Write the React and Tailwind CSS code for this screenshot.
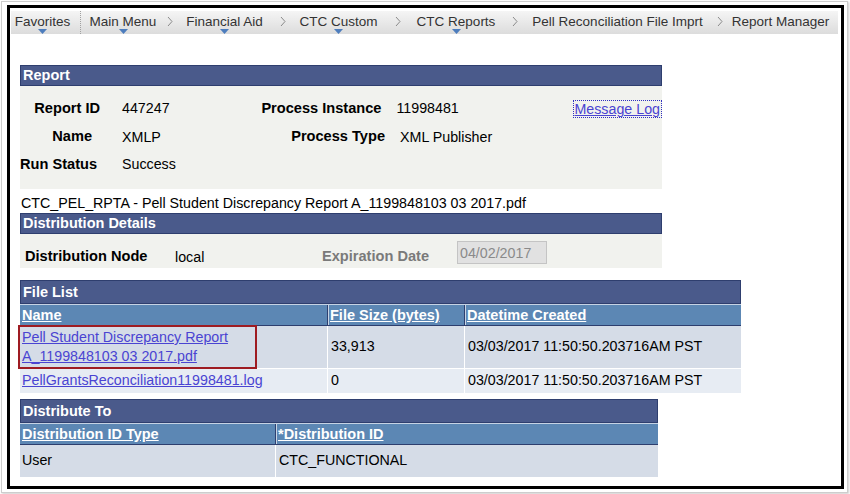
import React from "react";

// breadcrumb items: width of centred box, whether a drop-down marker sits under the text
const crumbs = [
  { label: "Main Menu", w: "w-[84px]", drop: true },
  { label: "Financial Aid", w: "w-[103px]", drop: true, chev: "ml-[2px]" },
  { label: "CTC Custom", w: "w-[105px]", drop: true, chev: "ml-[4px]" },
  { label: "CTC Reports", w: "w-[110px]", drop: true, chev: "ml-[4px]" },
  { label: "Pell Reconciliation File Imprt", w: "w-[199px]", drop: false, chev: "ml-[1px]" },
  { label: "Report Manager", w: "w-[115px]", drop: false, chev: "ml-0" },
];

function Chevron({ className }) {
  return (
    <svg className={className} width="6" height="23" viewBox="0 0 6 23">
      <polyline points="1,6 5,10.5 1,15" fill="none" stroke="#8a8a8a" strokeWidth="1" />
    </svg>
  );
}

function NavItem({ label, w, drop }) {
  return (
    <div className={`${w} h-[23px] flex flex-col items-center pt-[3px]`}>
      <span className="leading-[16px] text-[13.5px] text-[#333] whitespace-nowrap">{label}</span>
      {drop && (
        <svg width="9" height="5" viewBox="0 0 9 5" className="mt-[-1px]">
          <polygon points="0,0 9,0 4.5,5" fill="#4d7dbd" />
        </svg>
      )}
    </div>
  );
}

function SectionHeader({ children, h = "h-[21px]", w }) {
  return (
    <div
      className={`${w} ${h} bg-[#4a5a8b] border border-[#2e3e6e] flex items-center pl-[2px] text-white font-bold text-[14.5px] leading-none`}
    >
      {children}
    </div>
  );
}

function ColHead({ children, w, first }) {
  return (
    <div
      className={`${w} h-full flex items-center pl-[2px] ${
        first ? "" : "border-l border-[#2d4070] shadow-[inset_1px_0_0_#c9d5e5]"
      }`}
    >
      <span className="text-white font-bold underline text-[14.5px] leading-none">{children}</span>
    </div>
  );
}

export default function App() {
  const link = "text-[#4a44d2] underline";
  const label = "shrink-0 text-right font-bold text-[14.6px] whitespace-nowrap";
  return (
    <div className="w-[850px] h-[494px] bg-white pt-[1px] pl-[1px] font-['Liberation_Sans',Arial,sans-serif] text-black overflow-hidden">
      <div className="w-[847px] h-[492px] border border-[#cdcdcd] shadow-[1px_1px_2px_rgba(0,0,0,0.2)] pt-[3px] pl-[5px]">
        <div className="w-[837px] h-[484px] border-[3px] border-black bg-white pt-[3px] pl-[1px]">
          {/* breadcrumb bar */}
          <div className="w-[827px] h-[23px] bg-linear-to-b from-[#f5f5f5] to-[#dcdcdc] flex items-start">
            <NavItem label="Favorites" w="w-[63px]" drop />
            <div className="ml-[6px] h-[23px] border-l border-dotted border-[#a0a0a0]" />
            <NavItem label="Main Menu" w="w-[84px]" drop />
            {crumbs.slice(1).map((c) => (
              <React.Fragment key={c.label}>
                <Chevron className={c.chev} />
                <NavItem {...c} />
              </React.Fragment>
            ))}
          </div>

          <div className="ml-[9px] mt-[31px] text-[14.25px]">
            {/* Report */}
            <SectionHeader w="w-[642px]">Report</SectionHeader>
            <div className="w-[642px] bg-[#f1f2ee] pt-[9px] pb-[10px] whitespace-nowrap">
              <div className="flex items-center h-[28px]">
                <div className={`w-[80px] ${label}`}>Report ID</div>
                <div className="w-[143px] pl-[22px]">447247</div>
                <div className={`w-[142px] ${label}`}>Process Instance</div>
                <div className="w-[192px] shrink-0 pl-[15px]">11998481</div>
                <a className={`${link} shrink-0 border border-dotted border-[#3030c0] leading-[16px] pr-[1px]`}>
                  Message Log
                </a>
              </div>
              <div className="flex items-center h-[28px]">
                <div className={`w-[80px] pr-[8px] ${label}`}>Name</div>
                <div className="w-[143px] pl-[22px] pt-[2px]">XMLP</div>
                <div className={`w-[142px] ${label}`}>Process Type</div>
                <div className="pl-[15px] pt-[2px]">XML Publisher</div>
              </div>
              <div className="flex items-center h-[28px]">
                <div className={`w-[80px] pr-[3px] ${label}`}>Run Status</div>
                <div className="pl-[22px]">Success</div>
              </div>
            </div>

            <div className="h-[24px] pt-[6px] pl-[1px] leading-[16px] whitespace-nowrap">
              CTC_PEL_RPTA - Pell Student Discrepancy Report A_1199848103 03 2017.pdf
            </div>

            {/* Distribution Details */}
            <SectionHeader w="w-[642px]">Distribution Details</SectionHeader>
            <div className="w-[642px] h-[34px] bg-[#f1f2ee] flex items-start leading-[16px] whitespace-nowrap">
              <div className="w-[155px] pl-[5px] mt-[14px] font-bold text-[14.6px]">Distribution Node</div>
              <div className="w-[147px] mt-[15px]">local</div>
              <div className="w-[135px] mt-[14px] font-bold text-[14.6px] text-[#7a7a7a]">Expiration Date</div>
              <div className="mt-[7px] w-[90px] h-[23px] bg-[#e1e1e1] border border-[#c4c4c4] flex items-center pl-[2px] text-[#8a8a8a]">
                04/02/2017
              </div>
            </div>

            {/* File List */}
            <div className="mt-[12px] w-[721px]">
              <SectionHeader w="w-[721px]" h="h-[24px]">File List</SectionHeader>
              <div className="h-[22px] flex bg-[#5c87b4] border-t border-[#c6d3e4] border-b border-b-[#2d3e6e]">
                <ColHead w="w-[307px]" first>Name</ColHead>
                <ColHead w="w-[137px]">File Size (bytes)</ColHead>
                <ColHead w="flex-1">Datetime Created</ColHead>
              </div>
              <div className="h-[43px] flex bg-[#d5dce7] border-b border-white">
                <div className="relative w-[307px] pl-[2px] pt-[2px] leading-[19px]">
                  <a className={link}>
                    Pell Student Discrepancy Report
                    <br />
                    A_1199848103 03 2017.pdf
                  </a>
                  <div className="absolute left-[-2px] top-[-1px] w-[239px] h-[44px] border-2 border-[#9e1b22]" />
                </div>
                <div className="w-[137px] border-l border-white pl-[3px] flex items-center">33,913</div>
                <div className="flex-1 border-l border-white pl-[3px] flex items-center">
                  03/03/2017 11:50:50.203716AM PST
                </div>
              </div>
              <div className="h-[24px] flex bg-[#e7ecf3]">
                <div className="w-[307px] pl-[2px] flex items-center">
                  <a className={link}>PellGrantsReconciliation11998481.log</a>
                </div>
                <div className="w-[137px] border-l border-white pl-[3px] flex items-center">0</div>
                <div className="flex-1 border-l border-white pl-[3px] flex items-center">
                  03/03/2017 11:50:50.203716AM PST
                </div>
              </div>
            </div>

            {/* Distribute To */}
            <div className="mt-[6px] w-[638px]">
              <SectionHeader w="w-[638px]" h="h-[24px]">Distribute To</SectionHeader>
              <div className="h-[22px] flex bg-[#5c87b4] border-t border-[#c6d3e4] border-b border-b-[#2d3e6e]">
                <ColHead w="w-[255px]" first>Distribution ID Type</ColHead>
                <ColHead w="flex-1">*Distribution ID</ColHead>
              </div>
              <div className="h-[32px] flex bg-[#d5dce7]">
                <div className="w-[255px] pl-[2px] flex items-center">User</div>
                <div className="flex-1 border-l border-white pl-[3px] flex items-center">CTC_FUNCTIONAL</div>
              </div>
            </div>
          </div>
        </div>
      </div>
    </div>
  );
}
